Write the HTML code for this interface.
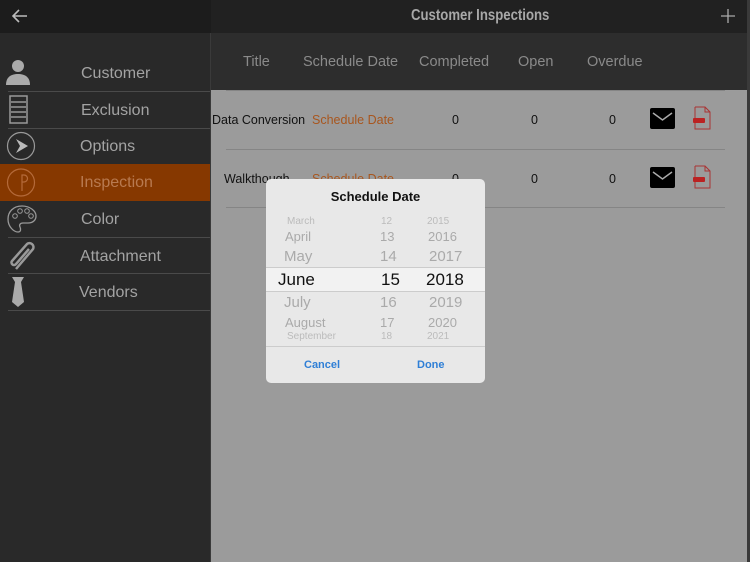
<!DOCTYPE html>
<html><head><style>
*{margin:0;padding:0;box-sizing:border-box}
body{width:750px;height:562px;overflow:hidden;position:relative;background:#9b9b9b;font-family:"Liberation Sans",sans-serif}
.abs{position:absolute}
#side{left:0;top:0;width:211px;height:562px;background:#292929;border-right:1px solid #3a3a3a}
#sidetop{left:0;top:0;width:211px;height:33px;background:#1c1c1c}
.row{position:absolute;left:0;width:210px;height:36px;color:#a3a3a3;font-size:16px}
.row .t{position:absolute;top:10px}
.div{position:absolute;left:8px;width:202px;height:1px;background:#4a4a4a}
#hdr{left:211px;top:0;width:539px;height:33px;background:#212121}
#cols{left:211px;top:33px;width:539px;height:57px;background:#2d2d2d}
.ch{position:absolute;top:21px;color:#8a8a8a;font-size:14.5px}
.cell{position:absolute;font-size:12.5px;color:#111}
.hl{position:absolute;left:226px;width:499px;height:1px;background:#858585}
</style></head><body>
<div id="side" class="abs"></div>
<div id="sidetop" class="abs"></div>
<svg class="abs" style="left:12px;top:9px" width="16" height="14" viewBox="0 0 16 14"><path d="M15 7H2M7 1L1 7l6 6" stroke="#bbb" stroke-width="1.6" fill="none"/></svg>

<div class="row" style="top:55px"><svg class="abs" style="left:5px;top:3px" width="26" height="28" viewBox="0 0 26 28"><circle cx="13" cy="8" r="6" fill="#aaa"/><path d="M1 27c0-8 5-11 12-11s12 3 12 11z" fill="#aaa"/></svg><span class="t" style="left:81px">Customer</span></div>
<div class="div" style="top:91px"></div>
<div class="row" style="top:92px"><svg class="abs" style="left:9px;top:3px" width="20" height="30" viewBox="0 0 20 30"><rect x="1" y="1" width="17" height="27" fill="none" stroke="#999" stroke-width="1.5"/><path d="M2 7h15M2 12h15M2 17h15M2 22h15" stroke="#999" stroke-width="1.5"/></svg><span class="t" style="left:81px">Exclusion</span></div>
<div class="div" style="top:128px"></div>
<div class="row" style="top:128px"><svg class="abs" style="left:6px;top:3px" width="30" height="30" viewBox="0 0 30 30"><circle cx="15" cy="15" r="13.5" fill="none" stroke="#999" stroke-width="1.2"/><path d="M10 8l12 7-12 7 4-7z" fill="#bbb"/></svg><span class="t" style="left:80px">Options</span></div>
<div class="div" style="top:164px"></div>
<div class="row" style="top:164px;height:37px;background:#863800;color:#b87a50"><svg class="abs" style="left:6px;top:3px" width="30" height="31" viewBox="0 0 30 31"><circle cx="15" cy="15.5" r="13.5" fill="none" stroke="#b46a3a" stroke-width="1.2"/><path d="M16 24V8h2a3 3 0 010 7h-2" stroke="#b46a3a" stroke-width="1.2" fill="none"/></svg><span class="t" style="left:80px">Inspection</span></div>
<div class="row" style="top:201px"><svg class="abs" style="left:6px;top:3px" width="32" height="30" viewBox="0 0 32 30"><path d="M16 2C7 2 2 8 2 15c0 8 6 13 10 13 3 0 3-3 2-5s0-4 3-4h5c5 0 8-3 8-7C30 7 24 2 16 2z" fill="none" stroke="#999" stroke-width="1.3"/><circle cx="9" cy="12" r="2.3" fill="none" stroke="#999"/><circle cx="14" cy="7" r="2.3" fill="none" stroke="#999"/><circle cx="21" cy="7" r="2.3" fill="none" stroke="#999"/><circle cx="25" cy="12" r="2.3" fill="none" stroke="#999"/></svg><span class="t" style="left:81px">Color</span></div>
<div class="div" style="top:237px"></div>
<div class="row" style="top:238px"><svg class="abs" style="left:6px;top:1px" width="34" height="34" viewBox="0 0 34 34"><path d="M10 30L27 10a4 4 0 00-6-5L6 22a2.5 2.5 0 004 3l13-15" fill="none" stroke="#999" stroke-width="2.5"/></svg><span class="t" style="left:80px">Attachment</span></div>
<div class="div" style="top:273px"></div>
<div class="row" style="top:274px"><svg class="abs" style="left:9px;top:2px" width="18" height="32" viewBox="0 0 18 32"><path d="M3 1h12l-3 5 3 20-6 5-6-5 3-20z" fill="#aaa"/></svg><span class="t" style="left:79px">Vendors</span></div>
<div class="div" style="top:310px"></div>

<div id="hdr" class="abs"><div style="position:absolute;left:200px;top:7px;color:#a8a8a8;font-weight:bold;font-size:15.5px;transform:scaleX(0.85);transform-origin:left;white-space:nowrap">Customer Inspections</div>
<svg class="abs" style="left:510px;top:9px" width="14" height="14"><path d="M7 0v14M0 7h14" stroke="#aaa" stroke-width="1.3"/></svg></div>
<div id="cols" class="abs">
<span class="ch" style="left:32px">Title</span><span class="ch" style="left:92px">Schedule Date</span><span class="ch" style="left:208px">Completed</span><span class="ch" style="left:307px">Open</span><span class="ch" style="left:376px">Overdue</span></div>
<div class="hl" style="top:90px"></div>
<span class="cell" style="left:212px;top:113px">Data Conversion</span><span class="cell" style="left:312px;top:113px;color:#a8561e">Schedule Date</span>
<span class="cell" style="left:452px;top:113px">0</span><span class="cell" style="left:531px;top:113px">0</span><span class="cell" style="left:609px;top:113px">0</span>
<div class="hl" style="top:149px"></div>
<span class="cell" style="left:224px;top:172px">Walkthough</span><span class="cell" style="left:312px;top:172px;color:#a8561e">Schedule Date</span>
<span class="cell" style="left:452px;top:172px">0</span><span class="cell" style="left:531px;top:172px">0</span><span class="cell" style="left:609px;top:172px">0</span>
<div class="hl" style="top:207px"></div>
<svg class="abs" style="left:650px;top:108px" width="25" height="21"><rect width="25" height="21" rx="2" fill="#000"/><path d="M3 5l9.5 7L22 5" stroke="#aaa" stroke-width="1.5" fill="none"/></svg>
<svg class="abs" style="left:650px;top:167px" width="25" height="21"><rect width="25" height="21" rx="2" fill="#000"/><path d="M3 5l9.5 7L22 5" stroke="#aaa" stroke-width="1.5" fill="none"/></svg>
<svg class="abs" style="left:692px;top:106px" width="20" height="25" viewBox="0 0 20 25"><path d="M3 1h10l5 5v17H3v-6M3 12V1" fill="none" stroke="#a33" stroke-width="1"/><path d="M13 1v5h5" fill="none" stroke="#a33"/><rect x="1" y="12" width="12" height="5" rx="1" fill="#b22"/></svg>
<svg class="abs" style="left:692px;top:165px" width="20" height="25" viewBox="0 0 20 25"><path d="M3 1h10l5 5v17H3v-6M3 12V1" fill="none" stroke="#a33" stroke-width="1"/><path d="M13 1v5h5" fill="none" stroke="#a33"/><rect x="1" y="12" width="12" height="5" rx="1" fill="#b22"/></svg>
<div class="abs" style="left:747px;top:0;width:3px;height:562px;background:#3a3a3a"></div>

<div class="abs" style="left:266px;top:179px;width:219px;height:204px;background:#e8e8e8;border-radius:5px;overflow:hidden">
<div class="abs" style="left:0;top:10px;width:219px;text-align:center;font-size:13px;font-weight:bold;color:#111">Schedule Date</div>
<div class="abs" style="left:0;top:88px;width:219px;height:25px;background:#f2f2f2;border-top:1px solid #ccc;border-bottom:1px solid #ccc"></div>
<div class="abs" style="left:0;top:167px;width:219px;height:1px;background:#ccc"></div>
<div style="position:absolute;top:0;left:0;width:219px;color:#aaa">
<span class="abs" style="left:21px;top:37px;font-size:10px;color:#bbb">March</span><span class="abs" style="left:115px;top:37px;font-size:10px;color:#bbb">12</span><span class="abs" style="left:161px;top:37px;font-size:10px;color:#bbb">2015</span>
<span class="abs" style="left:19px;top:50px;font-size:13px">April</span><span class="abs" style="left:114px;top:50px;font-size:13px">13</span><span class="abs" style="left:162px;top:50px;font-size:13px">2016</span>
<span class="abs" style="left:18px;top:69px;font-size:15px">May</span><span class="abs" style="left:114px;top:69px;font-size:15px">14</span><span class="abs" style="left:163px;top:69px;font-size:15px">2017</span>
<span class="abs" style="left:12px;top:91px;font-size:17px;color:#111">June</span><span class="abs" style="left:115px;top:91px;font-size:17px;color:#111">15</span><span class="abs" style="left:160px;top:91px;font-size:17px;color:#111">2018</span>
<span class="abs" style="left:18px;top:115px;font-size:15px">July</span><span class="abs" style="left:114px;top:115px;font-size:15px">16</span><span class="abs" style="left:163px;top:115px;font-size:15px">2019</span>
<span class="abs" style="left:19px;top:136px;font-size:13px">August</span><span class="abs" style="left:114px;top:136px;font-size:13px">17</span><span class="abs" style="left:162px;top:136px;font-size:13px">2020</span>
<span class="abs" style="left:21px;top:152px;font-size:10px;color:#bbb">September</span><span class="abs" style="left:115px;top:152px;font-size:10px;color:#bbb">18</span><span class="abs" style="left:161px;top:152px;font-size:10px;color:#bbb">2021</span>
</div>
<span class="abs" style="left:38px;top:180px;font-size:11px;color:#2f7fd6;font-weight:bold">Cancel</span>
<span class="abs" style="left:151px;top:180px;font-size:11px;color:#2f7fd6;font-weight:bold">Done</span>
</div>
</body></html>
